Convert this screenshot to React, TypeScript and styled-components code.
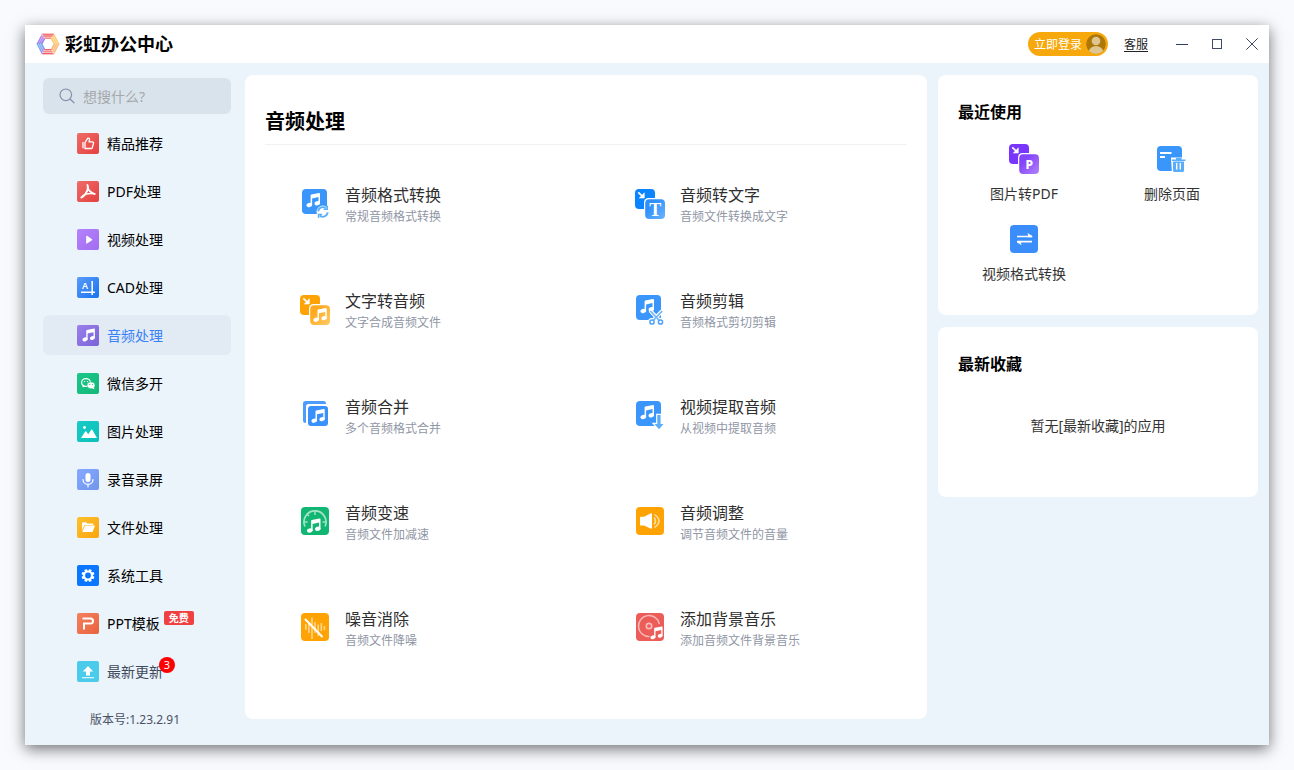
import React from "react";
import styled, { createGlobalStyle } from "styled-components";

const GlobalStyle = createGlobalStyle`
  *, *::before, *::after { box-sizing: border-box; }
  body {
    margin: 0;
    background: #f8fafe;
    color: #000;
    font-family: "Noto Sans", "Noto Sans CJK SC", sans-serif;
  }
  button, input { font-family: inherit; }
  h1, h2, ul, p { margin: 0; padding: 0; }
  ul { list-style: none; }
`;

/* ---------- shell ---------- */

const Page = styled.div`
  padding: 25px;
`;

const Window = styled.div`
  background: #ebf3fb;
  box-shadow: 0 4px 14px rgba(0, 0, 0, 0.55);
`;

const TitleBar = styled.header`
  display: flex;
  align-items: center;
  height: 38px;
  padding: 0 11px;
  background: #fff;
`;

const Brand = styled.div`
  display: flex;
  align-items: center;
  gap: 5px;
  flex: 1;
`;

const BrandName = styled.h1`
  font-size: 18px;
  line-height: 26px;
  font-weight: 700;
`;

const LoginButton = styled.button`
  display: flex;
  align-items: center;
  gap: 4px;
  height: 24px;
  padding: 0 2px 0 6px;
  border: 0;
  border-radius: 12px;
  background: #f7a80c;
  color: #fff;
  cursor: pointer;
`;

const BarText = styled.span`
  padding-top: 2px;
  font-size: 12px;
  line-height: 16px;
`;

const ServiceLink = styled.a`
  display: flex;
  margin: 0 22px 0 16px;
  color: #222;
  text-decoration: underline;
  text-underline-offset: 2px;
`;

const WindowControls = styled.div`
  display: flex;
  gap: 11px;
  margin-right: -6px;
`;

const WindowButton = styled.button`
  display: flex;
  align-items: center;
  justify-content: center;
  width: 24px;
  height: 24px;
  padding: 0;
  border: 0;
  background: transparent;
  cursor: pointer;
`;

const Body = styled.div`
  display: flex;
  align-items: flex-start;
  padding: 12px 11px 17px 18px;
`;

/* ---------- sidebar ---------- */

const Sidebar = styled.nav`
  flex: none;
  width: 188px;
  margin-right: 14px;
  padding-top: 3px;
`;

const SearchBox = styled.label`
  display: flex;
  align-items: center;
  gap: 8px;
  height: 36px;
  margin-bottom: 9px;
  padding: 0 16px;
  border-radius: 6px;
  background: #d9e3ec;
`;

const SearchInput = styled.input`
  flex: 1;
  width: 100%;
  min-width: 0;
  padding: 2px 0 0;
  border: 0;
  outline: 0;
  background: transparent;
  color: #333;
  font-size: 14px;
  line-height: 20px;
  &::placeholder { color: #a6a8ab; opacity: 1; }
`;

const NavList = styled.ul`
  display: flex;
  flex-direction: column;
  gap: 8px;
`;

const NavLink = styled.a<{ $active?: boolean; $muted?: boolean }>`
  display: flex;
  align-items: center;
  gap: 8px;
  height: 40px;
  padding-left: 34px;
  border-radius: 6px;
  background: ${(p) => (p.$active ? "#e2eaf4" : "transparent")};
  color: ${(p) => (p.$active ? "#3a82f7" : p.$muted ? "#3f4a5c" : "#000")};
  font-size: 14px;
  line-height: 20px;
  text-decoration: none;
`;

const NavLabel = styled.span`
  position: relative;
  padding-top: 2px;
  white-space: nowrap;
`;

const FreeTag = styled.span`
  position: absolute;
  left: 100%;
  top: -1px;
  margin-left: 4px;
  padding: 0 5px;
  border-radius: 2px;
  background: #f04142;
  color: #fff;
  font-size: 10px;
  line-height: 14px;
  font-weight: 700;
`;

const CountBadge = styled.span`
  position: absolute;
  right: -12px;
  top: -3px;
  width: 16px;
  height: 16px;
  border-radius: 8px;
  background: #f00;
  color: #fff;
  font-size: 11px;
  line-height: 16px;
  text-align: center;
`;

const Version = styled.p`
  margin-top: 21px;
  padding-left: 47px;
  color: #4a5264;
  font-size: 12px;
  line-height: 16px;
`;

/* ---------- main panel ---------- */

const MainPanel = styled.main`
  flex: 1;
  min-width: 0;
  padding: 31px 6px 69px;
  border-radius: 8px;
  background: #fff;
`;

const MainTitle = styled.h2`
  margin: 0 14px 37px;
  padding-bottom: 6px;
  border-bottom: 1px solid #f1f1f3;
  font-size: 20px;
  line-height: 32px;
  font-weight: 700;
`;

const ToolGrid = styled.ul`
  display: grid;
  grid-template-columns: 1fr 1fr;
  row-gap: 62px;
`;

const ToolButton = styled.button`
  display: flex;
  align-items: center;
  gap: 15px;
  width: 100%;
  padding: 0 0 0 49px;
  border: 0;
  background: transparent;
  text-align: left;
  cursor: pointer;
`;

const ToolText = styled.span`
  display: flex;
  flex-direction: column;
`;

const ToolName = styled.span`
  color: #2f2f2f;
  font-size: 16px;
  line-height: 26px;
`;

const ToolHint = styled.span`
  color: #9096a5;
  font-size: 12px;
  line-height: 18px;
`;

/* ---------- right column ---------- */

const Aside = styled.aside`
  display: flex;
  flex-direction: column;
  gap: 12px;
  flex: 0 0 320px;
  margin-left: 11px;
`;

const Card = styled.section`
  padding: 25px 12px 31px;
  border-radius: 8px;
  background: #fff;
`;

const CardTitle = styled.h2`
  padding-left: 8px;
  font-size: 16px;
  line-height: 24px;
  font-weight: 700;
`;

const RecentGrid = styled.ul`
  display: grid;
  grid-template-columns: 1fr 1fr;
  row-gap: 20px;
  margin-top: 20px;
`;

const RecentButton = styled.button`
  display: flex;
  flex-direction: column;
  align-items: center;
  gap: 10px;
  width: 100%;
  padding: 0;
  border: 0;
  background: transparent;
  color: #333;
  font-size: 14px;
  line-height: 20px;
  cursor: pointer;
`;

const EmptyText = styled.p`
  padding: 40px 0 30px;
  color: #333;
  font-size: 14px;
  line-height: 20px;
  text-align: center;
`;

const Icon = styled.svg`
  display: block;
  flex: none;
`;

/* ---------- drawings ---------- */

function Note({ x, y, s = 1 }: { x: number; y: number; s?: number }) {
  return (
    <g transform={`translate(${x} ${y}) scale(${s})`} fill="#fff">
      <path d="M4.6 2.4Q4.6 1.7 5.3 1.5L13 .1Q14 0 14 .9V10.400H12.500V4L6.100 5.400V12.200H4.600Z" />
      <ellipse cx="3.300" cy="11.900" rx="2.900" ry="2.100" transform="rotate(-18 3.300 11.900)" />
      <ellipse cx="11.300" cy="10.300" rx="2.800" ry="2.100" transform="rotate(-18 11.300 10.300)" />
    </g>
  );
}

function Logo() {
  return (
    <Icon width="24" height="24" viewBox="0 0 24 24" aria-hidden="true">
      <linearGradient id="logo-left" x1="0" y1="0" x2="0" y2="1">
        <stop offset="0" stopColor="#d58ad8" />
        <stop offset="1" stopColor="#8b7cf0" />
      </linearGradient>
      <linearGradient id="logo-low" x1="0" y1="0" x2="1" y2="1">
        <stop offset="0" stopColor="#5cc0f5" />
        <stop offset="1" stopColor="#b47be8" />
      </linearGradient>
      <path d="M6 1.500H18L14.800 7H9.200Z" fill="#f58a80" />
      <path d="M18 1.500L23.500 12H17.500L14.800 7Z" fill="#fccb74" />
      <path d="M23.500 12L18 22.500L14.800 17L17.500 12Z" fill="#fbb878" />
      <path d="M18 22.500H6L9.200 17H14.800Z" fill="#f78b8b" />
      <path d="M6 22.500L.5 12H6.500L9.200 17Z" fill="url(#logo-low)" />
      <path d="M.5 12L6 1.500L9.200 7L6.500 12Z" fill="url(#logo-left)" />
      <g stroke="#fff" strokeWidth=".7" strokeOpacity=".6" fill="none">
        <path d="M5 3.500H17M7.500 5.600H16M7.500 18.400H17M6 20.500H18.500" />
        <path d="M17 3.300L21.600 12L17 20.700M16 5.200L19.600 12L16 18.800" />
        <path d="M7 3.300L2.400 12L7 20.700M8 5.200L4.400 12L8 18.800" />
      </g>
      <path d="M7 3H17.500M6.500 21.500H16.500M8 17.500H15.500" stroke="#ec5560" strokeWidth=".8" />
    </Icon>
  );
}

const navGradients: Record<string, [string, string]> = {
  like: ["#ee6c68", "#e5403f"],
  pdf: ["#ee6c68", "#e5403f"],
  video: ["#b583fb", "#a26cf0"],
  cad: ["#5a9bf8", "#1873f2"],
  audio: ["#9a80ea", "#7a63d8"],
  wechat: ["#1cc68a", "#12b878"],
  image: ["#17cbc6", "#0cc0ba"],
  record: ["#86a9ff", "#6f96ea"],
  file: ["#fdc02f", "#fba50c"],
  system: ["#0a76ff", "#0a76ff"],
  ppt: ["#f5815f", "#e9623c"],
  update: ["#4bcbea", "#4bcbea"],
};

const navGlyphs: Record<string, React.ReactNode> = {
  like: (
    <g fill="none" stroke="#fff" strokeWidth="1.300" strokeLinejoin="round">
      <path d="M6 10V16.300" />
      <path d="M8 10.500L10.800 6.200Q12.800 5.800 12.500 8L12 9.800H15.500Q16.800 10 16.500 11.300L15.300 15.700Q15 16.500 14.200 16.500H8Z" />
    </g>
  ),
  pdf: (
    <g fill="none" stroke="#fff" strokeLinecap="round">
      <path d="M10.400 5Q12 8.500 8.800 13.200Q6.500 16.800 4.300 17.500" strokeWidth="1.900" />
      <path d="M10.600 7.500Q11.500 11.500 17.800 14" strokeWidth="1.700" />
      <path d="M5.500 16Q9.500 12.700 17.500 13.800" strokeWidth="1.500" />
    </g>
  ),
  video: <path d="M9.200 8.300Q9.200 7.300 10 7.800L15 11.200Q15.500 11.700 15 12.200L10 15.500Q9.200 16 9.200 15Z" fill="#fff" />,
  cad: (
    <>
      <text x="5" y="13" fill="#fff" fontSize="9" fontWeight="600">A</text>
      <path d="M4 16.300H18M15.200 5V19" stroke="#fff" strokeWidth="1.600" />
    </>
  ),
  audio: <Note x={5} y={4.500} s={0.92} />,
  wechat: (
    <>
      <ellipse cx="9" cy="10.500" rx="4.400" ry="3.900" fill="none" stroke="#fff" strokeWidth="1.200" />
      <path d="M5.800 13L5.500 15.500L8.200 14.200Z" fill="#fff" />
      <circle cx="7.500" cy="9.600" r=".7" fill="#fff" />
      <circle cx="10.500" cy="9.600" r=".7" fill="#fff" />
      <ellipse cx="14" cy="13.300" rx="4" ry="3.400" fill="#fff" stroke="#15bd7e" strokeWidth=".5" />
      <path d="M15 16L17.300 17.400L17 15Z" fill="#fff" />
      <circle cx="12.700" cy="12.500" r=".6" fill="#15bd7e" />
      <circle cx="15.400" cy="12.500" r=".6" fill="#15bd7e" />
    </>
  ),
  image: (
    <>
      <circle cx="7.500" cy="7.500" r="1.400" fill="#fff" />
      <path d="M4 18L8.200 11.500Q8.700 10.900 9.200 11.500L11.200 14.200L14.200 9.800Q14.800 9.100 15.300 9.800L20 18Z" fill="#fff" />
    </>
  ),
  record: (
    <>
      <rect x="8.500" y="5" width="5" height="9" rx="2.500" fill="#fff" />
      <path d="M6 11.500C6 18 16 18 16 11.500M11 16.300V19" fill="none" stroke="#fff" strokeWidth="1.200" strokeLinecap="round" />
    </>
  ),
  file: (
    <path d="M5 7Q5 6.200 5.800 6.200H9L10.300 7.500H15.500Q16.300 7.500 16.300 8.300V9H7.600L5 14ZM8.200 9.600H18L15.900 15.300Q15.600 16 14.900 16H5.800Q5.100 16 5.400 15.200Z" fill="#fff" />
  ),
  system: (
    <>
      <circle cx="11" cy="11.500" r="4" fill="none" stroke="#fff" strokeWidth="2.200" />
      {[0, 45, 90, 135, 180, 225, 270, 315].map((a) => (
        <rect key={a} x="9.600" y="5" width="2.800" height="2.500" rx=".5" fill="#fff" transform={`rotate(${a + 22.5} 11 11.500)`} />
      ))}
    </>
  ),
  ppt: (
    <path d="M5.500 6.500H13.500Q16 6.500 16 9Q16 11.500 13.500 11.500H7V17.500" fill="none" stroke="#fff" strokeWidth="2" />
  ),
  update: (
    <path d="M11 6L16.200 11.500H13V15.500H9V11.500H5.800ZM5 17.200H17V18.200H5Z" fill="#fff" />
  ),
};

function NavIcon({ name }: { name: string }) {
  const [from, to] = navGradients[name];
  const id = `nav-${name}`;
  return (
    <Icon width="22" height="22" viewBox="0 0 22 22" aria-hidden="true">
      <linearGradient id={id} x1="0" y1="0" x2="1" y2="1">
        <stop offset="0" stopColor={from} />
        <stop offset="1" stopColor={to} />
      </linearGradient>
      <rect y="1" width="22" height="21" rx="2" fill={`url(#${id})`} />
      {navGlyphs[name]}
    </Icon>
  );
}

/* Two overlapping tiles: source in the back, result in front. */
function PairTiles({ id, back, from, to, children }: { id: string; back: string; from: string; to: string; children: React.ReactNode }) {
  return (
    <>
      <linearGradient id={id} x1="0" y1="0" x2="1" y2="1">
        <stop offset=".3" stopColor={from} />
        <stop offset="1" stopColor={to} />
      </linearGradient>
      <rect width="20" height="20" rx="4" fill={back} />
      <path d="M3.300 3.300L7.500 7.300" stroke="#fff" strokeWidth="1.800" />
      <path d="M9.300 3.800V9H4.300L6.800 6.600Z" fill="#fff" stroke="#fff" strokeWidth=".6" />
      <rect x="9" y="9" width="22" height="22" rx="4.500" fill="#fff" />
      <rect x="10.200" y="10.200" width="19.800" height="19.800" rx="4" fill={`url(#${id})`} />
      {children}
    </>
  );
}

const toolIcons: Record<string, React.ReactNode> = {
  convert: (
    <>
      <rect x="2" width="25" height="25" rx="4" fill="#3a96fb" />
      <Note x={6} y={4} />
      <circle cx="22.800" cy="22.800" r="6.200" fill="#fff" />
      <g fill="none" stroke="#5cb0fb" strokeWidth="1.800">
        <path d="M18.200 22.300A4.700 4.700 0 0 1 26 19.300M27.600 23.300A4.700 4.700 0 0 1 19.700 26.500" />
        <path d="M27.300 16.800V20.300H23.600M18.500 29V25.500H22.200" strokeWidth="1.400" />
      </g>
    </>
  ),
  toText: (
    <PairTiles id="to-text" back="#0a84ff" from="#2f8ffb" to="#6bb4ff">
      <text x="20.200" y="26.500" textAnchor="middle" fill="#fff" fontSize="18" fontWeight="700" fontFamily="Liberation Serif, serif">T</text>
    </PairTiles>
  ),
  toAudio: (
    <PairTiles id="to-audio" back="#ffa204" from="#ffab22" to="#ffcb66">
      <Note x={13} y={13} s={0.98} />
    </PairTiles>
  ),
  cut: (
    <>
      <rect x="1" width="25" height="25" rx="4" fill="#3a96fb" />
      <Note x={5} y={4} />
      <g fill="none" strokeLinecap="round">
        <path d="M16 16.500L24.500 25.500M26.500 16.500L18 25.500" stroke="#fff" strokeWidth="4" />
        <g stroke="#fff" strokeWidth="4">
          <circle cx="17" cy="27" r="2" />
          <circle cx="25.500" cy="27" r="2" />
        </g>
        <path d="M15.800 16.500L24.200 25.300M26.700 16.500L18.300 25.300" stroke="#74b8fb" strokeWidth="1.700" />
        <g stroke="#4ba3fa" strokeWidth="1.500">
          <circle cx="17" cy="27" r="2.100" />
          <circle cx="25.500" cy="27" r="2.100" />
        </g>
      </g>
    </>
  ),
  merge: (
    <>
      <path d="M26 3V2.500Q26 0 23.500 0H5.500Q3 0 3 2.500V19.500Q3 22 6 22V5.500Q6 3 8.500 3Z" fill="#4c9dfb" />
      <rect x="8" y="5" width="20" height="20" rx="3" fill="#3a91fb" />
      <Note x={11} y={8} s={0.98} />
    </>
  ),
  extract: (
    <>
      <rect x="1" width="25" height="25" rx="4" fill="#3a96fb" />
      <Note x={5} y={4} />
      <path d="M22.300 14H25.600V23H28.500L24 28.200L19.400 23H22.300Z" fill="#5cadfb" stroke="#fff" strokeWidth="2.400" />
      <path d="M22.300 14H25.600V23H28.500L24 28.200L19.400 23H22.300Z" fill="#5cadfb" />
    </>
  ),
  speed: (
    <>
      <rect x="1" width="28" height="28" rx="4" fill="#12b673" />
      <path d="M5 19.500A11 11 0 1 1 25 19.500" fill="none" stroke="#a5e3c8" strokeWidth="1.700" />
      <path d="M15 4V8M4.500 15H7.500M22.500 15H25.500M7.500 7.500L9 9" stroke="#a5e3c8" strokeWidth="1.400" />
      <Note x={6.500} y={11.500} />
    </>
  ),
  volume: (
    <>
      <rect x="1" width="28" height="28" rx="4" fill="#ffa304" />
      <path d="M5 10.500Q5 9.800 5.700 9.800H9L15.500 6.500Q17 6 17 7.300V20.700Q17 22 15.500 21.500L9 18.500H5.700Q5 18.500 5 17.800Z" fill="#fff" />
      <g fill="none" stroke="#ffe3ad" strokeWidth="1.500">
        <path d="M19 10.500Q22 14 19 17.500" />
        <path d="M19.500 7.500Q28.500 14 19.500 20.500" />
      </g>
    </>
  ),
  denoise: (
    <>
      <rect x="1" width="28" height="28" rx="4" fill="#ffa304" />
      <path d="M5.800 11V17M8.900 9V20M12 4.500V26M15 9V20M18.200 11.500V23M21.300 10V18M24.400 13V17" stroke="#ffd68a" strokeWidth="1.600" />
      <path d="M5.500 6.500L22 23.500" stroke="#fff" strokeWidth="1.900" strokeLinecap="round" />
    </>
  ),
  addMusic: (
    <>
      <rect x="1" width="28" height="28" rx="4" fill="#ec5c59" />
      <path d="M14.500 23.500A10.500 10.500 0 1 1 24.300 11" fill="none" stroke="#f8b9b7" strokeWidth="1.500" />
      <circle cx="14" cy="13" r="2.700" fill="none" stroke="#f8b9b7" strokeWidth="1.700" />
      <Note x={15} y={13.500} s={0.9} />
    </>
  ),
  toPdf: (
    <PairTiles id="to-pdf" back="#7a35fc" from="#8445fa" to="#b283fb">
      <text x="20.300" y="24.500" textAnchor="middle" fill="#fff" fontSize="12" fontWeight="800">P</text>
    </PairTiles>
  ),
  deletePage: (
    <>
      <rect y="2" width="25" height="25" rx="4" fill="#3a96fb" />
      <path d="M3 9H14.500M3 13H8" stroke="#fff" strokeWidth="2" />
      <path d="M14 13.500H29V30H15Z" fill="#fff" />
      <path d="M16 17.500H27V26.500Q27 28 25.500 28H17.500Q16 28 16 26.500ZM15 15.500H28.500V17H15ZM19 14H24.500V15.500H19Z" fill="#5aadfb" />
      <path d="M19.700 19V25.500M23.300 19V25.500" stroke="#fff" strokeWidth="1.400" />
    </>
  ),
  swap: (
    <>
      <rect x="1" y="1" width="28" height="28" rx="4" fill="#3a8dfb" />
      <path d="M8 12.500H23M8 17.700H23" stroke="#fff" strokeWidth="1.700" />
      <path d="M18.500 9L23.300 12V13.300H19.500ZM12.500 21.300L8 18.300V17H11.500Z" fill="#fff" />
    </>
  ),
};

function ToolIcon({ name }: { name: string }) {
  return (
    <Icon width="30" height="30" viewBox="0 0 30 30" overflow="visible" aria-hidden="true">
      {toolIcons[name]}
    </Icon>
  );
}

/* ---------- data ---------- */

const navItems = [
  { icon: "like", label: "精品推荐" },
  { icon: "pdf", label: "PDF处理" },
  { icon: "video", label: "视频处理" },
  { icon: "cad", label: "CAD处理" },
  { icon: "audio", label: "音频处理", active: true },
  { icon: "wechat", label: "微信多开" },
  { icon: "image", label: "图片处理" },
  { icon: "record", label: "录音录屏" },
  { icon: "file", label: "文件处理" },
  { icon: "system", label: "系统工具" },
  { icon: "ppt", label: "PPT模板", tag: "免费" },
  { icon: "update", label: "最新更新", count: 3, muted: true },
];

const tools = [
  { icon: "convert", name: "音频格式转换", hint: "常规音频格式转换" },
  { icon: "toText", name: "音频转文字", hint: "音频文件转换成文字" },
  { icon: "toAudio", name: "文字转音频", hint: "文字合成音频文件" },
  { icon: "cut", name: "音频剪辑", hint: "音频格式剪切剪辑" },
  { icon: "merge", name: "音频合并", hint: "多个音频格式合并" },
  { icon: "extract", name: "视频提取音频", hint: "从视频中提取音频" },
  { icon: "speed", name: "音频变速", hint: "音频文件加减速" },
  { icon: "volume", name: "音频调整", hint: "调节音频文件的音量" },
  { icon: "denoise", name: "噪音消除", hint: "音频文件降噪" },
  { icon: "addMusic", name: "添加背景音乐", hint: "添加音频文件背景音乐" },
];

const recents = [
  { icon: "toPdf", name: "图片转PDF" },
  { icon: "deletePage", name: "删除页面" },
  { icon: "swap", name: "视频格式转换" },
];

export default function App() {
  return (
    <Page>
      <GlobalStyle />
      <Window>
        <TitleBar>
          <Brand>
            <Logo />
            <BrandName>彩虹办公中心</BrandName>
          </Brand>
          <LoginButton type="button">
            <BarText>立即登录</BarText>
            <Icon width="20" height="20" viewBox="0 0 20 20" aria-hidden="true">
              <clipPath id="avatar"><circle cx="10" cy="10" r="10" /></clipPath>
              <g clipPath="url(#avatar)">
                <circle cx="10" cy="10" r="10" fill="#ae7808" />
                <circle cx="10" cy="7" r="4.300" fill="#dfc691" />
                <ellipse cx="10" cy="18" rx="7.200" ry="6" fill="#dfc691" />
              </g>
            </Icon>
          </LoginButton>
          <ServiceLink href="#service"><BarText>客服</BarText></ServiceLink>
          <WindowControls>
            <WindowButton type="button" aria-label="最小化">
              <Icon width="12" height="12" stroke="#323c63"><path d="M0 6.500H12" /></Icon>
            </WindowButton>
            <WindowButton type="button" aria-label="最大化">
              <Icon width="12" height="12" fill="none" stroke="#3f4968"><rect x="1.500" y="1.500" width="9" height="9" /></Icon>
            </WindowButton>
            <WindowButton type="button" aria-label="关闭">
              <Icon width="12" height="12" stroke="#3f4968"><path d="M.3 .3L11.700 11.700M11.700 .3L.3 11.700" /></Icon>
            </WindowButton>
          </WindowControls>
        </TitleBar>

        <Body>
          <Sidebar>
            <SearchBox>
              <Icon width="16" height="16" viewBox="0 0 16 16" fill="none" stroke="#8391ab" strokeWidth="1.200" strokeLinecap="round" aria-hidden="true">
                <circle cx="6.800" cy="6.800" r="5.800" />
                <path d="M11 11L15 14.800" />
              </Icon>
              <SearchInput type="text" placeholder="想搜什么?" aria-label="搜索" />
            </SearchBox>
            <NavList>
              {navItems.map((item) => (
                <li key={item.icon}>
                  <NavLink
                    href={`#${item.icon}`}
                    $active={item.active}
                    $muted={item.muted}
                    aria-current={item.active ? "page" : undefined}
                  >
                    <NavIcon name={item.icon} />
                    <NavLabel>
                      {item.label}
                      {item.tag && <FreeTag>{item.tag}</FreeTag>}
                      {item.count && <CountBadge>{item.count}</CountBadge>}
                    </NavLabel>
                  </NavLink>
                </li>
              ))}
            </NavList>
            <Version>版本号:1.23.2.91</Version>
          </Sidebar>

          <MainPanel>
            <MainTitle>音频处理</MainTitle>
            <ToolGrid>
              {tools.map((tool) => (
                <li key={tool.icon}>
                  <ToolButton type="button">
                    <ToolIcon name={tool.icon} />
                    <ToolText>
                      <ToolName>{tool.name}</ToolName>
                      <ToolHint>{tool.hint}</ToolHint>
                    </ToolText>
                  </ToolButton>
                </li>
              ))}
            </ToolGrid>
          </MainPanel>

          <Aside>
            <Card>
              <CardTitle>最近使用</CardTitle>
              <RecentGrid>
                {recents.map((item) => (
                  <li key={item.icon}>
                    <RecentButton type="button">
                      <ToolIcon name={item.icon} />
                      {item.name}
                    </RecentButton>
                  </li>
                ))}
              </RecentGrid>
            </Card>
            <Card>
              <CardTitle>最新收藏</CardTitle>
              <EmptyText>暂无[最新收藏]的应用</EmptyText>
            </Card>
          </Aside>
        </Body>
      </Window>
    </Page>
  );
}
